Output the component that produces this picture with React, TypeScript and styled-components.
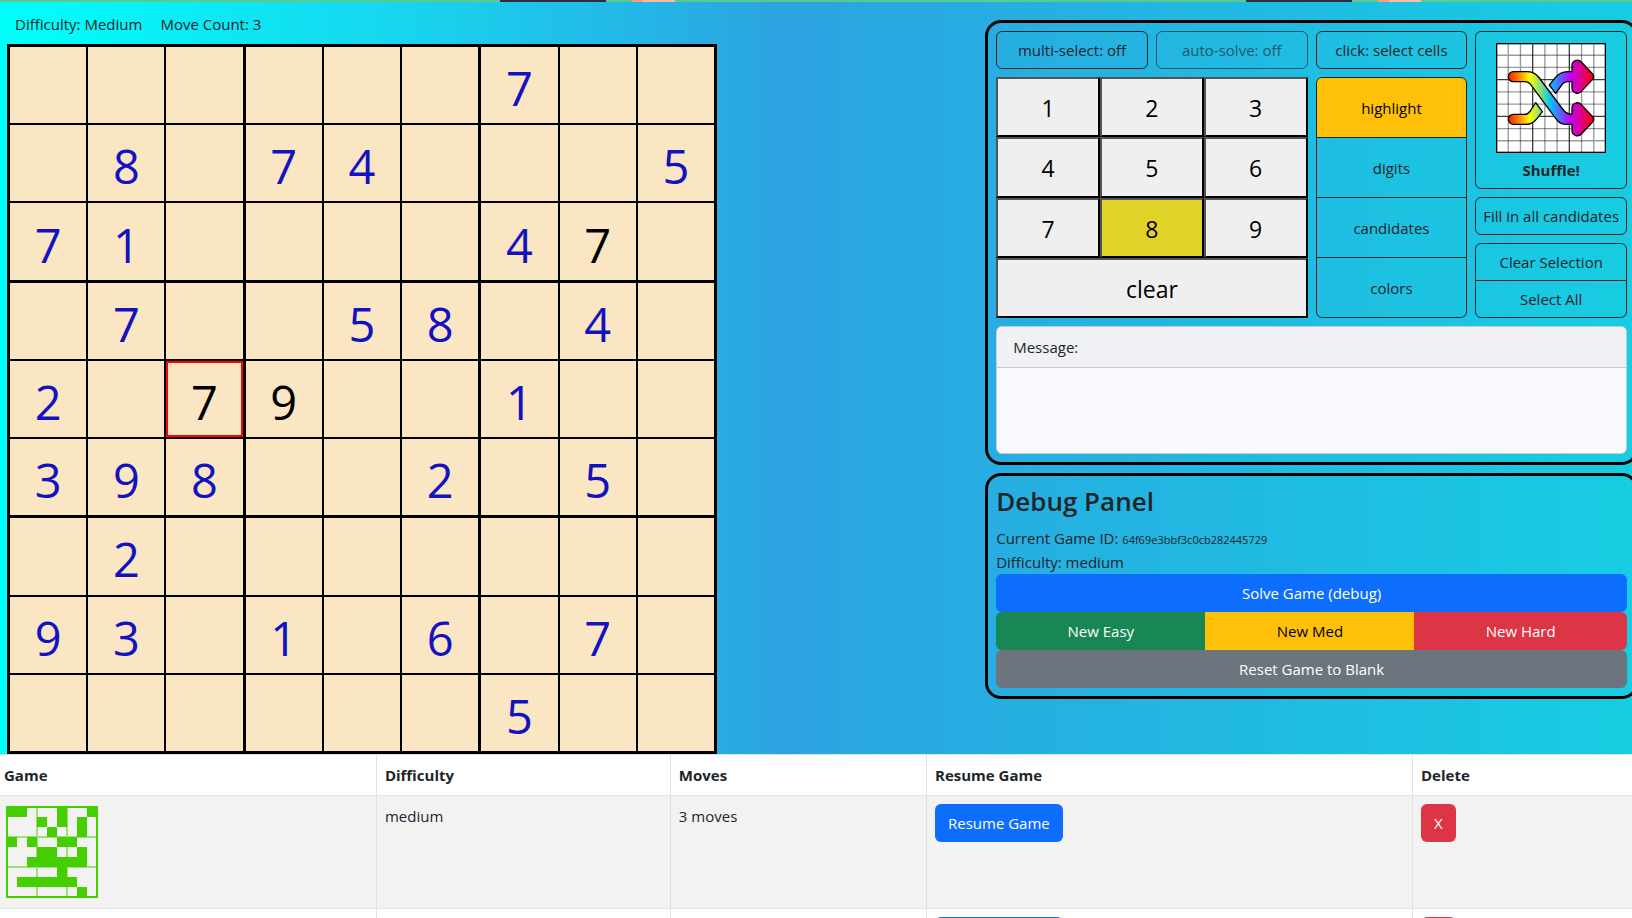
import React, { useState } from "react";
import styled, { createGlobalStyle, css } from "styled-components";

const ink = "#212529";

const GlobalStyle = createGlobalStyle`
  *, *::before, *::after { box-sizing: border-box; }
  body {
    margin: 0;
    color: ${ink};
    background: #fff;
    font-family: "Open Sans", "Noto Sans", sans-serif;
    font-size: 15px;
    line-height: 24px;
  }
  button { font-family: inherit; margin: 0; cursor: pointer; }
`;

const Page = styled.div`
  height: 100vh;
  overflow: hidden;
`;

const Banner = styled.header`
  height: 2px;
  background: linear-gradient(
    90deg,
    #58cb8f 500px, #2c2f3e 500px, #2c2f3e 606px, #58cb8f 606px, #58cb8f 632px,
    #f99f80 632px, #f99f80 642px, #ffbba4 644px, #ffbba4 675px, #58cb8f 675px,
    #58cb8f 1246px, #2c2f3e 1246px, #2c2f3e 1352px, #58cb8f 1352px, #58cb8f 1378px,
    #f99f80 1378px, #f99f80 1388px, #ffbba4 1390px, #ffbba4 1421px, #58cb8f 1421px
  );
`;

const Backdrop = styled.div`
  background: linear-gradient(90deg, #00fffa 1%, #18d4ee 25%, #2ca3e1 48%, #17cde2 100%);
`;

const Play = styled.main`
  display: flex;
  justify-content: space-between;
  align-items: flex-start;
`;

const BoardSide = styled.section`
  width: 44vw;
  padding-left: 7px;
`;

const Status = styled.div`
  display: flex;
  gap: 18px;
  padding: 10px 8px 8px;
`;

const Board = styled.div`
  width: 100%;
  max-width: 710px;
  aspect-ratio: 1;
  border: 3px solid #000;
  background: #000;
  display: grid;
  grid-template: repeat(3, 1fr) / repeat(3, 1fr);
  gap: 3px;
`;

const Box = styled.div`
  display: grid;
  grid-template: repeat(3, 1fr) / repeat(3, 1fr);
  gap: 2px;
`;

const Cell = styled.button<{ $given: boolean; $selected: boolean }>`
  display: flex;
  align-items: center;
  justify-content: center;
  min-width: 0;
  padding: 6px 0 0;
  border: 0;
  background: #fae6c2;
  color: ${(p) => (p.$given ? "#1212c0" : "#000")};
  font-size: 47px;
  line-height: 64px;
  box-shadow: ${(p) => (p.$selected ? "inset 0 0 0 2px #f00" : "none")};
`;

const Side = styled.aside`
  width: 40vw;
  margin: 18px -6px 0 0;
  display: flex;
  flex-direction: column;
  gap: 8px;
`;

const Panel = styled.section`
  border: 3px solid #000;
  border-radius: 16px;
  padding: 8px;
`;

const Tools = styled.div`
  display: grid;
  grid-template-columns: repeat(4, minmax(0, 1fr));
  grid-template-rows: 38px 241px;
  gap: 8px;
`;

const Outline = styled.button<{ $active?: boolean }>`
  height: 38px;
  padding: 0;
  border: 1px solid ${ink};
  border-radius: 6px;
  background: ${(p) => (p.$active ? "#ffc107" : "transparent")};
  color: ${(p) => (p.$active ? "#000" : ink)};
  font-size: 15px;
  line-height: 24px;
  white-space: nowrap;
  &:disabled { opacity: 0.65; cursor: default; }
`;

const Keypad = styled.div`
  grid-column: span 2;
  display: grid;
  grid-template: repeat(4, 1fr) / repeat(3, 1fr);
`;

const Key = styled.button<{ $on?: boolean; $wide?: boolean }>`
  border: 2px outset #000;
  padding: 2px 0 0;
  background: ${(p) => (p.$on ? "#e2d32a" : "#efefef")};
  color: #000;
  font-size: 23px;
  line-height: 32px;
  ${(p) => p.$wide && css`grid-column: 1 / -1;`}
`;

const Stack = styled.div`
  display: flex;
  flex-direction: column;
  ${Outline} {
    flex: 1 1 0;
    border-radius: 0;
    &:not(:first-child) { margin-top: -1px; }
    &:first-child { border-radius: 6px 6px 0 0; }
    &:last-child { border-radius: 0 0 6px 6px; }
  }
`;

const Actions = styled.div`
  grid-column: 4;
  grid-row: 1 / span 2;
  display: flex;
  flex-direction: column;
  gap: 8px;
`;

const PairStack = styled(Stack)`
  flex: 1;
`;

const ShuffleButton = styled(Outline)`
  height: 158px;
  display: flex;
  flex-direction: column;
  align-items: center;
  padding: 11px 0 0;
  gap: 5px;
  font-weight: 700;
`;

const Message = styled.div`
  margin-top: 8px;
  min-height: 128px;
  border: 1px solid #c9cbd0;
  border-radius: 6px;
  background: #f8f9fc;
  overflow: hidden;
`;

const MessageHead = styled.div`
  padding: 8px 16px;
  border-bottom: 1px solid #c5c7cb;
  background: #f0f1f4;
`;

const Title = styled.h2`
  margin: 0 0 8px;
  font-size: 26px;
  line-height: 34px;
  font-weight: 600;
`;

const Line = styled.div``;

const GameId = styled.small`
  font-size: 11px;
  line-height: 12px;
`;

const tones = {
  primary: ["#0d6efd", "#fff"],
  success: ["#198754", "#fff"],
  warning: ["#ffc107", "#000"],
  danger: ["#dc3545", "#fff"],
  secondary: ["#6c757d", "#fff"],
} as const;

const Solid = styled.button<{ $tone: keyof typeof tones; $block?: boolean }>`
  display: ${(p) => (p.$block ? "block" : "inline-block")};
  width: ${(p) => (p.$block ? "100%" : "auto")};
  height: 38px;
  padding: 0 13px;
  border: 0;
  border-radius: 6px;
  background: ${(p) => tones[p.$tone][0]};
  color: ${(p) => tones[p.$tone][1]};
  font-size: 15px;
  line-height: 24px;
  vertical-align: top;
`;

const Group = styled.div`
  display: flex;
  ${Solid} {
    flex: 1 1 auto;
    border-radius: 0;
    &:first-child { border-radius: 6px 0 0 6px; }
    &:last-child { border-radius: 0 6px 6px 0; }
  }
`;

const TableWrap = styled.div`
  margin: 0 -6px 0 -5px;
`;

const Games = styled.table`
  width: 100%;
  table-layout: fixed;
  border-collapse: collapse;
  background: #fff;
  th, td {
    border: 1px solid #dee2e6;
    padding: 8px;
    text-align: left;
    vertical-align: top;
  }
  th { font-weight: 700; }
  tbody tr:nth-child(odd) { background: #f2f2f2; }
`;

const Column = styled.col<{ $share: number }>`
  width: ${(p) => p.$share}%;
`;

const Thumb = styled.svg`
  display: block;
  margin: 2px;
`;

const puzzle = [
  "......7..",
  ".8.74...5",
  "71....4#.",
  ".7..58.4.",
  "2.#*..1..",
  "398..2.5.",
  ".2.......",
  "93.1.6.7.",
  "......5..",
];
const entered: Record<string, string> = { "#": "7", "*": "9" };

const thumbRows = [
  "11...1..1",
  "...1.1.1.",
  "....1..1.",
  "1.1..11..",
  "...11..1.",
  "..111111.",
  ".....1...",
  ".111111..",
  ".......1.",
];

function ShuffleIcon() {
  const steps = [1, 2, 4, 5, 7, 8].map((n) => (n * 110) / 3);
  return (
    <svg width="110" height="110" viewBox="0 0 330 330" aria-hidden="true">
      <defs>
        <linearGradient id="rainbow" gradientUnits="userSpaceOnUse" x1="37" y1="0" x2="294" y2="0">
          <stop offset="0" stopColor="#ff1a00" />
          <stop offset="0.12" stopColor="#ff8000" />
          <stop offset="0.25" stopColor="#ffff00" />
          <stop offset="0.38" stopColor="#7fdf80" />
          <stop offset="0.5" stopColor="#00bfff" />
          <stop offset="0.72" stopColor="#bf00ff" />
          <stop offset="1" stopColor="#ff0000" />
        </linearGradient>
      </defs>
      <rect x="2" y="2" width="326" height="326" fill="#fff" stroke="#000" strokeWidth="4" />
      <g stroke="#000" strokeOpacity="0.4" strokeWidth="4">
        {steps.map((s) => (
          <path key={s} d={`M${s} 3V327M3 ${s}H327`} />
        ))}
      </g>
      <path d="M110 3V327M220 3V327M3 110H327M3 220H327" stroke="#000" strokeOpacity="0.75" strokeWidth="4" />
      <g fill="url(#rainbow)" stroke="#000" strokeWidth="4" strokeLinejoin="round">
        <path d="M52 86H90C110 86 119 91 130 105L202 201C210 211 216 214 228 214V196A16 16 0 0 1 256 185L289 220Q297 229 289 238L256 273A16 16 0 0 1 228 262V244H210C194 244 187 238 175 221L102 122C97 117 94 116 86 116H52A15 15 0 0 1 52 86Z" />
        <path d="M160 126L176 106C189 90 200 86 215 86H228V68A16 16 0 0 1 256 57L289 92Q297 101 289 110L256 145A16 16 0 0 1 228 134V116H215C205 116 201 120 195 129L179 151Z" />
        <path d="M52 214H86C94 214 98 211 103 204L119 179L139 206L126 223C114 239 105 244 88 244H52A15 15 0 0 1 52 214Z" />
      </g>
    </svg>
  );
}

function GameThumb() {
  return (
    <Thumb width="92" height="92" viewBox="0 0 92 92" role="img" aria-label="Game preview">
      <path d="M31 1V91M61 1V91M1 31H91M1 61H91" stroke="#46cf00" strokeOpacity="0.5" strokeWidth="2" />
      {thumbRows.map((row, r) =>
        [...row].map((c, x) =>
          c === "1" ? <rect key={`${r}-${x}`} x={1 + x * 10} y={1 + r * 10} width="10" height="10" fill="#46cf00" /> : null
        )
      )}
      <rect x="1" y="1" width="90" height="90" fill="none" stroke="#46cf00" strokeWidth="2" />
    </Thumb>
  );
}

function GameRow({ moves }: { moves: number }) {
  return (
    <tr>
      <td><GameThumb /></td>
      <td>medium</td>
      <td>{moves} moves</td>
      <td><Solid $tone="primary">Resume Game</Solid></td>
      <td><Solid $tone="danger" aria-label="Delete game">X</Solid></td>
    </tr>
  );
}

export default function App() {
  const [selected, setSelected] = useState("4-2");
  const [mode, setMode] = useState("highlight");
  const [digit, setDigit] = useState(8);
  const three = [0, 1, 2];

  return (
    <Page>
      <GlobalStyle />
      <Backdrop>
        <Banner />
        <Play>
          <BoardSide>
            <Status>
              <span>Difficulty: Medium</span>
              <span>Move Count: 3</span>
            </Status>
            <Board>
              {three.map((br) =>
                three.map((bc) => (
                  <Box key={`${br}${bc}`}>
                    {three.map((r) =>
                      three.map((c) => {
                        const row = br * 3 + r;
                        const col = bc * 3 + c;
                        const mark = puzzle[row][col];
                        const id = `${row}-${col}`;
                        return (
                          <Cell
                            key={id}
                            $given={!(mark in entered)}
                            $selected={id === selected}
                            onClick={() => setSelected(id)}
                          >
                            {mark === "." ? "" : entered[mark] ?? mark}
                          </Cell>
                        );
                      })
                    )}
                  </Box>
                ))
              )}
            </Board>
          </BoardSide>
          <Side>
            <Panel>
              <Tools>
                <Outline>multi-select: off</Outline>
                <Outline disabled>auto-solve: off</Outline>
                <Outline>click: select cells</Outline>
                <Keypad>
                  {[1, 2, 3, 4, 5, 6, 7, 8, 9].map((n) => (
                    <Key key={n} $on={n === digit} onClick={() => setDigit(n)}>{n}</Key>
                  ))}
                  <Key $wide onClick={() => setDigit(0)}>clear</Key>
                </Keypad>
                <Stack>
                  {["highlight", "digits", "candidates", "colors"].map((m) => (
                    <Outline key={m} $active={m === mode} onClick={() => setMode(m)}>{m}</Outline>
                  ))}
                </Stack>
                <Actions>
                  <ShuffleButton>
                    <ShuffleIcon />
                    Shuffle!
                  </ShuffleButton>
                  <Outline>Fill in all candidates</Outline>
                  <PairStack>
                    <Outline>Clear Selection</Outline>
                    <Outline>Select All</Outline>
                  </PairStack>
                </Actions>
              </Tools>
              <Message>
                <MessageHead>Message:</MessageHead>
              </Message>
            </Panel>
            <Panel>
              <Title>Debug Panel</Title>
              <Line>Current Game ID: <GameId>64f69e3bbf3c0cb282445729</GameId></Line>
              <Line>Difficulty: medium</Line>
              <Solid $tone="primary" $block>Solve Game (debug)</Solid>
              <Group>
                <Solid $tone="success">New Easy</Solid>
                <Solid $tone="warning">New Med</Solid>
                <Solid $tone="danger">New Hard</Solid>
              </Group>
              <Solid $tone="secondary" $block>Reset Game to Blank</Solid>
            </Panel>
          </Side>
        </Play>
      </Backdrop>
      <TableWrap>
        <Games>
          <colgroup>
            <Column $share={23.2} />
            <Column $share={17.9} />
            <Column $share={15.6} />
            <Column $share={29.6} />
            <Column $share={13.7} />
          </colgroup>
          <thead>
            <tr>
              <th>Game</th>
              <th>Difficulty</th>
              <th>Moves</th>
              <th>Resume Game</th>
              <th>Delete</th>
            </tr>
          </thead>
          <tbody>
            <GameRow moves={3} />
            <GameRow moves={0} />
          </tbody>
        </Games>
      </TableWrap>
    </Page>
  );
}
